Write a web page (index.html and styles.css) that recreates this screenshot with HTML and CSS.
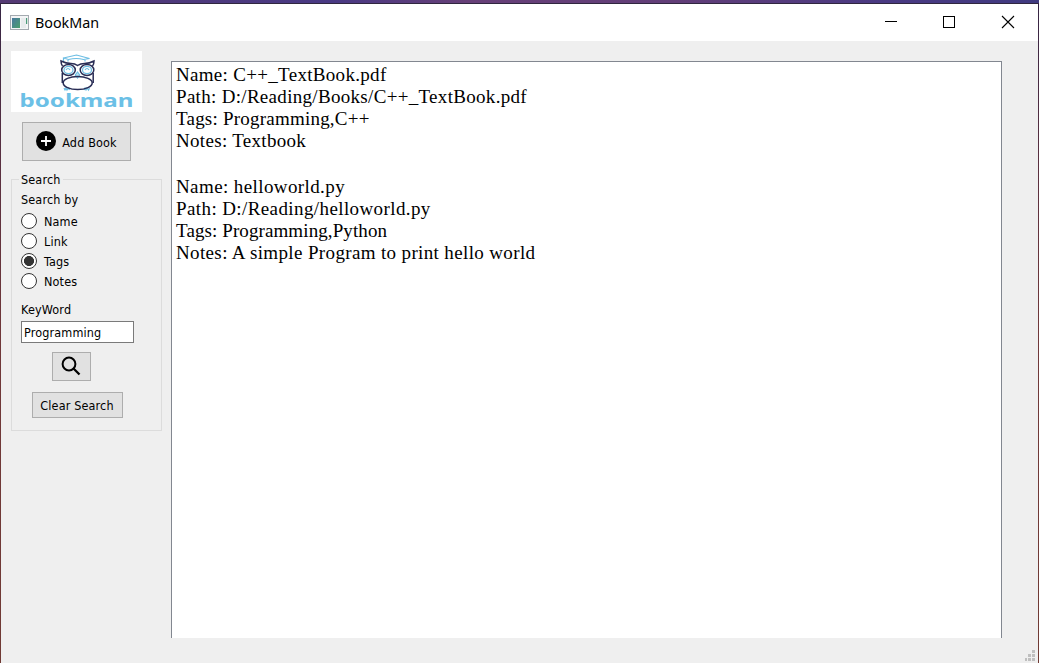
FILE: index.html
```html
<!DOCTYPE html>
<html lang="en">
<head>
<meta charset="utf-8">
<title>BookMan</title>
<link rel="stylesheet" href="styles.css">
</head>
<body>
<div class="desktop">
<div class="window">
  <header class="titlebar">
    <svg class="app-icon" width="19" height="16" viewBox="0 0 19 16">
      <defs><linearGradient id="pane" x1="0" y1="0" x2="1" y2="1"><stop offset="0" stop-color="#4a78a0"/><stop offset="1" stop-color="#4aa06c"/></linearGradient></defs>
      <rect x=".5" y=".5" width="18" height="14" fill="#f4f5f6" stroke="#a4aab0"/>
      <rect x="2" y="3" width="8" height="10" fill="url(#pane)"/>
      <rect x="11" y="3" width="5" height="10" fill="#e8ebed"/>
      <rect x="16" y="3" width="1.2" height="6" fill="#4a9a78"/>
    </svg>
    <span class="title">BookMan</span>
    <svg class="controls" width="132" height="14" viewBox="0 0 132 14" fill="none" stroke="#000" shape-rendering="crispEdges">
      <path d="M0 6.500h12M58.500 1.500h11v11h-11z"/>
      <path d="M117 1l12 12M129 1l-12 12" shape-rendering="auto" stroke-width="1.1"/>
    </svg>
  </header>
  <main class="content">
    <aside class="sidebar">
      <div class="logo">
        <svg width="131" height="61" viewBox="0 0 131 61" fill="none">
          <g stroke="#6bbde3" stroke-width="1.200">
            <path d="M52.500 7l13-3 13 3.500-6 1q-7-2-15 0l-5-1.500v4M57 8v2.500M74 8v2.500"/>
            <ellipse cx="57.500" cy="19" rx="4.500" ry="3.600"/><ellipse cx="76" cy="19" rx="4.500" ry="3.600"/>
            <path d="M55 19q2-3 4 0M74 19q2-3 4 0"/>
            <path d="M66.500 21l-2.200 3 2.200 3 2.200-3z" fill="#bfe3f4"/>
            <path d="M53 37l1 2 1-2 1 2 1.500-2 1 2M73 39l1-2 1 2 1-2 1.500 2 1-2"/>
          </g>
          <g stroke="#292d55" stroke-width="1.500">
            <path d="M51.500 15q-1.500-2-1.500-5 5 2.500 10 2.500 4 0 6.500 2 3-2 7-2 5 0 9.500-2.500 0 3-1.500 5"/>
            <ellipse cx="57.500" cy="19" rx="6.800" ry="5.500"/><ellipse cx="76" cy="19" rx="6.800" ry="5.500"/>
            <path d="M51.300 22v10M82.200 22v10"/>
            <ellipse cx="66.700" cy="32" rx="14.500" ry="6.500"/>
          </g>
          <text class="wordmark" x="8.500" y="55.500" textLength="114" lengthAdjust="spacingAndGlyphs">bookman</text>
        </svg>
      </div>
      <button class="btn add">
        <svg width="20" height="20" viewBox="0 0 20 20"><circle cx="10" cy="10" r="10"/><path d="M10 5v10M5 10h10" stroke="#fff" stroke-width="1.800"/></svg>
        <span>Add Book</span>
      </button>
      <fieldset class="search">
        <legend><span>Search</span></legend>
        <div class="caption by">Search by</div>
        <label class="option"><i class="radio"></i><span>Name</span></label>
        <label class="option"><i class="radio"></i><span>Link</span></label>
        <label class="option"><i class="radio checked"></i><span>Tags</span></label>
        <label class="option"><i class="radio"></i><span>Notes</span></label>
        <div class="caption keyword">KeyWord</div>
        <input class="field" type="text" value="Programming">
        <button class="btn find"><svg width="20" height="20" viewBox="0 0 20 20" fill="none" stroke="#000"><circle cx="8" cy="8" r="6.400" stroke-width="2"/><path d="M12.500 12.500l6 6" stroke-width="2.300"/></svg></button>
        <button class="btn clear">Clear Search</button>
      </fieldset>
    </aside>
    <section class="results">
      <div class="record"><p>Name: C++_TextBook.pdf</p><p>Path: D:/Reading/Books/C++_TextBook.pdf</p><p class="snug">Tags: Programming,C++</p><p>Notes: Textbook</p></div>
      <div class="record"><p class="loose">Name: helloworld.py</p><p class="loose">Path: D:/Reading/helloworld.py</p><p class="tight">Tags: Programming,Python</p><p class="wide">Notes: A simple Program to print hello world</p></div>
    </section>
    <svg class="grip" width="10" height="11" viewBox="0 0 10 11" fill="#bfbfbf" shape-rendering="crispEdges"><path d="M7 0h3v3H7zM3 4h3v3H3zM7 4h3v3H7zM0 8h2v3H0zM3 8h3v3H3zM7 8h3v3H7z"/></svg>
  </main>
</div>
</div>
</body>
</html>
```
FILE: styles.css
```css
* { box-sizing: border-box; }
body { margin: 0; overflow: hidden; font: 12.5px/20px "DejaVu Sans Condensed", "DejaVu Sans", sans-serif; font-stretch: condensed; letter-spacing: .15px; color: #000; }
.desktop { height: 663px; padding: 3px 1px 0; background: linear-gradient(90deg, #553a74, #493984 32%, #674078 45%, #623e78 65%, #4a3a83 85%, #403a80) top / 100% 3px no-repeat, linear-gradient(#352544, #5a3040 25%, #70383a 50%, #703a34); }
.window { height: 660px; border-top: 1px solid #30263f; display: flex; flex-direction: column; background: #efefef; }
.titlebar { height: 37px; display: flex; align-items: center; background: #fff; padding: 0 21px 0 9px; }
.app-icon { margin-top: 0; }
.title { margin: 1px 0 0 6px; font: 14.3px/20px "Noto Sans", sans-serif; letter-spacing: 0; }
.controls { margin: -1px 0 0 auto; }
.content { flex: 1; display: flex; align-items: flex-start; position: relative; }
.sidebar { width: 151px; margin: 10px 9px 0 10px; }
.logo { width: 131px; height: 61px; background: #fff; }
.logo svg { display: block; }
.wordmark { font: bold 18px "Noto Sans", sans-serif; letter-spacing: 0; fill: #6bc0e6; }
.btn { display: flex; align-items: center; justify-content: center; border: 1px solid #adadad; background: #e1e1e1; padding: 0; font: inherit; letter-spacing: inherit; color: #000; }
.add { width: 109px; height: 39px; margin: 10px 0 0 11px; gap: 6px; }
.add svg { margin-bottom: 2px; }
.add span { padding-top: 2px; }
.search { margin: 8px 0 0; padding: 0 9px; border: 1px solid #dcdcdc; height: 262px; min-width: 0; }
.search legend { height: 20px; padding: 0 2px; margin-left: -2px; line-height: 22px; }
.caption { line-height: 20px; }
.by { line-height: 22px; height: 20px; }
.option { display: flex; align-items: center; height: 20px; gap: 7px; }
.by + .option { margin-top: 2px; }
.option span { padding-top: 1px; }
.radio { width: 16px; height: 16px; border: 1px solid #333; border-radius: 50%; background: #fff; }
.radio.checked { background: radial-gradient(circle, #333 0 4.700px, #fff 5.300px); }
.keyword { margin-top: 9px; }
.field { display: block; width: 113px; height: 22px; margin: 1px 0 9px; padding: 1px 2px 0; border: 1px solid #7a7a7a; font: inherit; letter-spacing: inherit; color: #000; }
.find { width: 39px; height: 29px; margin-left: 31px; padding: 0 2px 2px 0; }
.clear { width: 91px; height: 26px; margin: 11px 0 0 11px; padding: 2px 1px 0 0; }
.results { width: 831px; height: 577px; margin-top: 20px; padding: 2px 4px; background: #fff; border: 1px solid #828790; border-bottom: 0; font: 19px/22px "Liberation Serif", serif; letter-spacing: .31px; }
.results p { margin: 0; white-space: pre; }
.record { margin-bottom: 24px; }
.snug { letter-spacing: .22px; }
.tight { letter-spacing: .1px; }
.loose { letter-spacing: .4px; }
.wide { letter-spacing: .36px; }
.grip { position: absolute; right: 3px; bottom: 2px; }
```
